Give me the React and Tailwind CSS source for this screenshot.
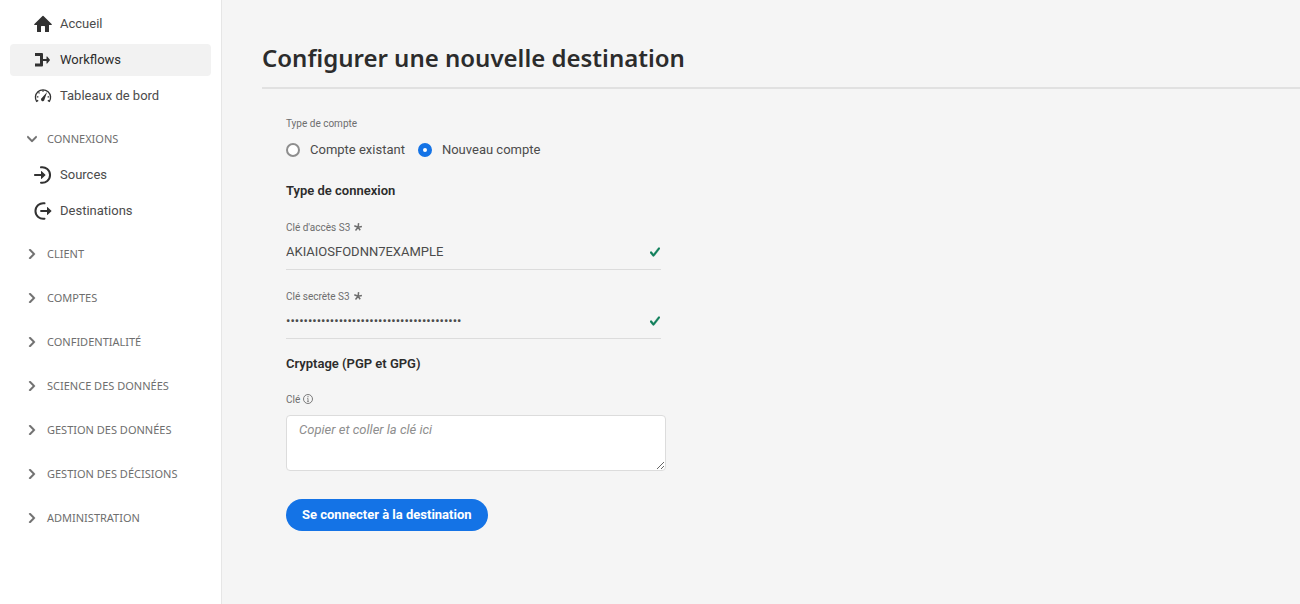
import { useState } from "react";

function HomeIcon() {
  return (
    <svg className="size-[18px] shrink-0" viewBox="0 0 18 18" fill="currentColor" aria-hidden="true">
      <path d="M8.5 1a.7.7 0 0 1 1 0l8.1 8.1a.5.5 0 0 1-.35.9H15v6.4a.6.6 0 0 1-.6.6H11v-5.4a.6.6 0 0 0-.6-.6H7.600a.6.6 0 0 0-.6.6V17H3.600a.6.6 0 0 1-.6-.6V10H.75a.5.5 0 0 1-.35-.9z" />
    </svg>
  );
}

function WorkflowIcon() {
  return (
    <svg className="size-[18px] shrink-0" viewBox="0 0 18 18" fill="currentColor" aria-hidden="true">
      <path d="M1 2h7a1 1 0 0 1 1 1v5h3.500V5.800a.4.4 0 0 1 .7-.3l2.700 3.150a.5.5 0 0 1 0 .7l-2.700 3.150a.4.4 0 0 1-.7-.3V10H9v4.500a1 1 0 0 1-1 1H1v-3h5V5H1z" />
    </svg>
  );
}

function GaugeIcon() {
  return (
    <svg className="size-[18px] shrink-0" viewBox="0 0 18 18" fill="none" stroke="currentColor" aria-hidden="true">
      <path d="M2.800 14.800A7.600 7.600 0 1 1 15.200 14.800" strokeWidth="1.300" />
      <path d="M2.800 9.800h1.600M4.500 5.400l1 1M9 3.300v1.500M15.200 9.800h-1.600M2.900 14.100l1.300-.7M15.100 14.100l-1.300-.7" strokeWidth="1.300" />
      <path d="M13.100 4.900 10.400 12.700a1.700 1.700 0 1 1-2.600-1.600z" fill="currentColor" stroke="none" />
    </svg>
  );
}

function SourcesIcon() {
  return (
    <svg className="size-[18px] shrink-0" viewBox="0 0 18 18" aria-hidden="true">
      <path d="M7 1.300A7.800 7.800 0 1 1 7 16.700" fill="none" stroke="currentColor" strokeWidth="2" strokeLinecap="round" />
      <path d="M.8 8.100H7V5.500a.4.4 0 0 1 .7-.3l3.700 3.450a.5.5 0 0 1 0 .7l-3.700 3.450a.4.4 0 0 1-.7-.3V9.900H.8a.9.9 0 0 1 0-1.800z" fill="currentColor" />
    </svg>
  );
}

function DestinationsIcon() {
  return (
    <svg className="size-[18px] shrink-0" viewBox="0 0 18 18" aria-hidden="true">
      <path d="M10.500 1.300A7.800 7.800 0 1 0 10.500 16.700" fill="none" stroke="currentColor" strokeWidth="2" strokeLinecap="round" />
      <path d="M7 8.100h6V5.500a.4.4 0 0 1 .7-.3l3.700 3.450a.5.5 0 0 1 0 .7l-3.700 3.450a.4.4 0 0 1-.7-.3V9.900H7a.9.9 0 0 1 0-1.800z" fill="currentColor" />
    </svg>
  );
}

function Chevron({ open }) {
  return (
    <svg className={open ? "size-[10px] shrink-0 rotate-90" : "size-[10px] shrink-0"} viewBox="0 0 10 10" fill="currentColor" stroke="currentColor" strokeWidth=".4" aria-hidden="true">
      <path d="M3 9.950a.875.875 0 0 1-.615-1.498L5.880 5 2.385 1.547A.875.875 0 0 1 3.615.302L7.740 4.377a.876.876 0 0 1 0 1.246L3.615 9.698A.872.872 0 0 1 3 9.950z" />
    </svg>
  );
}

function Asterisk() {
  return (
    <svg className="size-2 shrink-0" viewBox="0 0 8 8" fill="none" stroke="currentColor" strokeWidth="1.500" aria-hidden="true">
      <path d="M4.100 4.300 4.600.1M4.100 4.300l3.800-.9M4.100 4.300l2.100 3M4.100 4.300 1.500 7.400M4.100 4.300.3 2.700" />
    </svg>
  );
}

function Check() {
  return (
    <svg className="mr-px size-[10px] shrink-0 text-[#12805c]" viewBox="0 0 10 10" fill="currentColor" stroke="currentColor" strokeWidth=".3" role="img" aria-label="Valide">
      <path d="M3.500 9.500a.999.999 0 0 1-.774-.368l-2.450-3a1 1 0 1 1 1.548-1.264l1.657 2.028 4.680-6.010A1 1 0 0 1 9.740 2.114l-5.450 7a1 1 0 0 1-.777.386z" />
    </svg>
  );
}

function InfoIcon() {
  return (
    <svg className="size-[10px] shrink-0" viewBox="0 0 10 10" fill="none" stroke="currentColor" aria-hidden="true">
      <circle cx="5" cy="5" r="4.500" strokeWidth=".9" />
      <path d="M4.200 4.400H5v3M4.100 7.400h1.800" strokeWidth=".8" />
      <circle cx="5" cy="2.700" r=".6" fill="currentColor" stroke="none" />
    </svg>
  );
}

const mainLinks = [
  { label: "Accueil", icon: HomeIcon },
  { label: "Workflows", icon: WorkflowIcon, active: true },
  { label: "Tableaux de bord", icon: GaugeIcon },
];

const connectionLinks = [
  { label: "Sources", icon: SourcesIcon },
  { label: "Destinations", icon: DestinationsIcon },
];

const sections = [
  "CLIENT",
  "COMPTES",
  "CONFIDENTIALITÉ",
  "SCIENCE DES DONNÉES",
  "GESTION DES DONNÉES",
  "GESTION DES DÉCISIONS",
  "ADMINISTRATION",
];

function NavList({ links }) {
  return (
    <ul className="flex flex-col gap-1 px-[10px]">
      {links.map(({ label, icon: Icon, active }) => (
        <li key={label}>
          <a
            href="#"
            aria-current={active ? "page" : undefined}
            className={
              active
                ? "flex h-8 items-center gap-2 rounded bg-[#f2f2f2] px-6 text-[#2c2c2c]"
                : "flex h-8 items-center gap-2 rounded px-6 text-[#4b4b4b]"
            }
          >
            <span className="text-[#323232]">
              <Icon />
            </span>
            {label}
          </a>
        </li>
      ))}
    </ul>
  );
}

function SectionButton({ label, open = false }) {
  return (
    <button
      type="button"
      aria-expanded={open}
      className="mt-[10px] flex h-[34px] w-full items-center gap-[10px] px-[27px] font-['Noto_Sans',sans-serif] text-[11px] text-[#6e6e6e]"
    >
      <Chevron open={open} />
      {label}
    </button>
  );
}

function Field({ id, label, type, value, onChange }) {
  return (
    <div className="w-full max-w-[375px]">
      <label htmlFor={id} className="flex h-4 items-center gap-1 text-[10px] text-[#6e6e6e]">
        {label}
        <Asterisk />
      </label>
      <div className="flex h-[35px] items-center border-b border-[#dcdcdc]">
        <input
          id={id}
          type={type}
          required
          value={value}
          onChange={(e) => onChange(e.target.value)}
          className="min-w-0 flex-1 bg-transparent text-[#4b4b4b] outline-none"
        />
        <Check />
      </div>
    </div>
  );
}

function AccountRadio({ value, label, account, onSelect }) {
  return (
    <label className="flex items-center gap-[10px]">
      <input
        type="radio"
        name="account"
        value={value}
        checked={account === value}
        onChange={() => onSelect(value)}
        className="size-[14px] appearance-none rounded-full border-2 border-[#8e8e8e] bg-white checked:border-[5px] checked:border-[#1473e6]"
      />
      {label}
    </label>
  );
}

export default function App() {
  const [account, setAccount] = useState("new");
  const [accessKey, setAccessKey] = useState("AKIAIOSFODNN7EXAMPLE");
  const [secretKey, setSecretKey] = useState("x".repeat(40));

  return (
    <div className="flex min-h-screen bg-[#f5f5f5] font-['Roboto','Noto_Sans',sans-serif] text-[13px] text-[#4b4b4b]">
      <nav className="w-[222px] shrink-0 border-r border-[#e6e6e6] bg-white pt-2">
        <NavList links={mainLinks} />
        <SectionButton label="CONNEXIONS" open />
        <div className="pt-[3px]">
          <NavList links={connectionLinks} />
        </div>
        {sections.map((label) => (
          <SectionButton key={label} label={label} />
        ))}
      </nav>

      <main className="min-w-0 flex-1 pt-10 pl-10">
        <h1 className="border-b-2 border-[#e1e1e1] pb-[11px] font-['Noto_Sans',sans-serif] text-[24px] leading-9 font-semibold text-[#2c2c2c]">
          Configurer une nouvelle destination
        </h1>

        <form className="flex flex-col items-start pt-[27px] pr-6 pl-6" onSubmit={(e) => e.preventDefault()}>
          <fieldset>
            <legend className="h-4 text-[10px] leading-4 text-[#6e6e6e]">Type de compte</legend>
            <div className="mt-2 flex h-5 items-center gap-[13px]">
              <AccountRadio value="existing" label="Compte existant" account={account} onSelect={setAccount} />
              <AccountRadio value="new" label="Nouveau compte" account={account} onSelect={setAccount} />
            </div>
          </fieldset>

          <h2 className="mt-[21px] leading-5 font-semibold text-[#2c2c2c]">Type de connexion</h2>
          <div className="mt-[18px] flex w-full flex-col gap-[18px]">
            <Field id="access-key" label="Clé d'accès S3" type="text" value={accessKey} onChange={setAccessKey} />
            <Field id="secret-key" label="Clé secrète S3" type="password" value={secretKey} onChange={setSecretKey} />
          </div>

          <h2 className="mt-[15px] leading-5 font-semibold text-[#2c2c2c]">Cryptage (PGP et GPG)</h2>
          <label htmlFor="key" className="mt-[17px] flex h-4 items-center gap-[3px] text-[10px] text-[#6e6e6e]">
            Clé
            <InfoIcon />
          </label>
          <textarea
            id="key"
            placeholder="Copier et coller la clé ici"
            className="mt-2 h-14 w-full max-w-[380px] resize rounded border border-[#dcdcdc] bg-white px-3 py-1 leading-5 outline-none placeholder:text-[#8e8e8e] placeholder:italic"
          />
          <button type="submit" className="mt-7 h-8 rounded-full bg-[#1473e6] px-4 font-bold text-white">
            Se connecter à la destination
          </button>
        </form>
      </main>
    </div>
  );
}
